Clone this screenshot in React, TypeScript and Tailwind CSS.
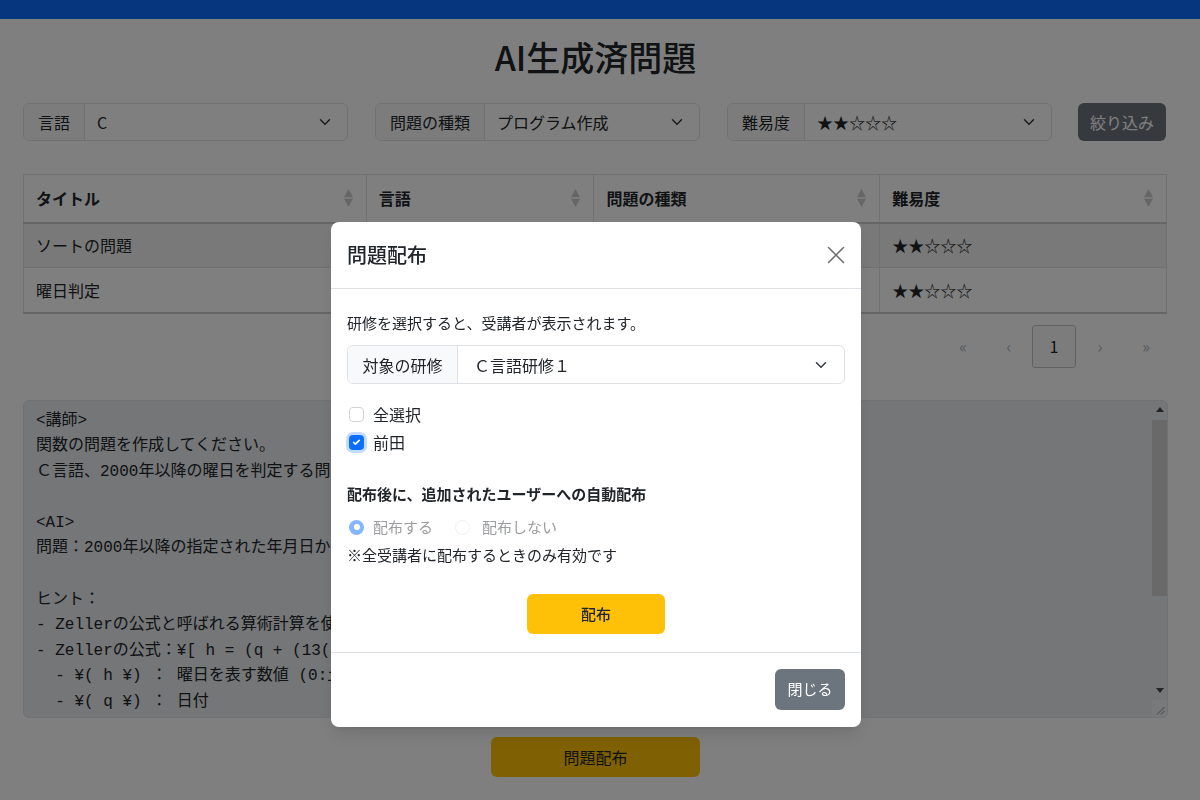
import React from "react";

const Chevron = () => (
  <svg width="16" height="12" viewBox="0 0 16 16" fill="none" stroke="#343a40" strokeWidth="2" strokeLinecap="round" strokeLinejoin="round">
    <path d="m2 5 6 6 6-6" />
  </svg>
);

const SortIcon = () => (
  <svg width="11" height="20" viewBox="0 0 11 20">
    <path d="M5.5 1 L10 9.3 H1 Z" fill="#c9ccd0" />
    <path d="M5.5 19 L10 10.7 H1 Z" fill="#c9ccd0" />
  </svg>
);

function FilterGroup({ label, value }: { label: string; value: string }) {
  return (
    <div className="flex h-[38px] w-[325px] rounded-md border border-[#dee2e6] bg-white">
      <div className="flex items-center rounded-l-md border-r border-[#dee2e6] bg-[#f8f9fa] px-[14px] text-[16px] text-[#212529]">
        {label}
      </div>
      <div className="flex flex-1 items-center justify-between pl-[12px] pr-[14px] text-[16px] text-[#212529]">
        <span>{value}</span>
        <Chevron />
      </div>
    </div>
  );
}

const textLines = [
  "<講師>",
  "関数の問題を作成してください。",
  "Ｃ言語、2000年以降の曜日を判定する問題にしてください。",
  "",
  "<AI>",
  "問題：2000年以降の指定された年月日から曜日を判定する関数を作成してください。",
  "",
  "ヒント：",
  "- Zellerの公式と呼ばれる算術計算を使用して曜日を求めます。",
  "- Zellerの公式：¥[ h = (q + (13(m+1))/5 + K + K/4 + J/4 + 5J) mod 7 ¥]",
  "  - ¥( h ¥) ： 曜日を表す数値 (0:土曜日, 1:日曜日, ..., 6:金曜日)",
  "  - ¥( q ¥) ： 日付",
  "  - ¥( m ¥) ： 月 (3:3月, 4:4月, ..., 14:2月)",
  "  - ¥( K ¥) ： 年の下2桁",
  "  - ¥( J ¥) ： 年の上2桁",
  "- 1月と2月は前年の13月と14月として扱います。",
  "",
  "入力例：",
  "2024 5 15",
];

export default function App() {
  const headers = [
    { t: "タイトル", w: "w-[343px]" },
    { t: "言語", w: "w-[228px]" },
    { t: "問題の種類", w: "w-[286px]" },
    { t: "難易度", w: "w-[287px]" },
  ];
  const rows = [
    ["ソートの問題", "C", "プログラム作成", "★★☆☆☆"],
    ["曜日判定", "C", "プログラム作成", "★★☆☆☆"],
  ];
  return (
    <div className="relative min-h-screen bg-white font-['Noto_Sans_CJK_JP',sans-serif] text-[#212529]">
      <div className="h-[19px] bg-[#0d6efd]" />
      <div className="ml-[23px] w-[1145px]">
        <h1 className="mt-[18px] text-center text-[34px] font-medium leading-[40px]">AI生成済問題</h1>

        <div className="mt-[26px] flex items-center gap-[27px]">
          <FilterGroup label="言語" value="C" />
          <FilterGroup label="問題の種類" value="プログラム作成" />
          <FilterGroup label="難易度" value="★★☆☆☆" />
          <button className="ml-[-1px] h-[38px] w-[88px] rounded-md bg-[#6c757d] text-[16px] text-white">絞り込み</button>
        </div>

        <table className="mt-[33px] w-[1144px] border-collapse text-[16px]">
          <thead>
            <tr className="h-[48px] bg-white">
              {headers.map((h) => (
                <th key={h.t} className={`${h.w} border border-b-2 border-[#dee2e6] border-b-[#c9cdd1] px-[12px] text-left font-bold`}>
                  <div className="flex items-center justify-between">
                    <span>{h.t}</span>
                    <SortIcon />
                  </div>
                </th>
              ))}
            </tr>
          </thead>
          <tbody>
            {rows.map((r, i) => (
              <tr key={i} className={`h-[45px] ${i === 0 ? "bg-[#f2f2f2]" : "bg-white"}`}>
                {r.map((c, j) => (
                  <td key={j} className={`border border-[#dee2e6] px-[12px] ${i === 1 ? "border-b-2 border-b-[#c9cdd1]" : ""}`}>
                    {c}
                  </td>
                ))}
              </tr>
            ))}
          </tbody>
        </table>

        <div className="mt-[11px] flex justify-end text-[16px]">
          <div className="flex h-[43px] w-[44px] items-center justify-center text-[#adb5bd]">«</div>
          <div className="ml-[2px] flex h-[43px] w-[44px] items-center justify-center text-[#adb5bd]">‹</div>
          <div className="ml-[1px] flex h-[43px] w-[44px] items-center justify-center rounded-[3px] border border-[#bfc4c9] bg-[#f8f9fa]">1</div>
          <div className="ml-[2px] flex h-[43px] w-[44px] items-center justify-center text-[#adb5bd]">›</div>
          <div className="ml-[2px] flex h-[43px] w-[44px] items-center justify-center text-[#adb5bd]">»</div>
        </div>

        <div className="relative mt-[32px] h-[318px] w-[1145px]">
          <textarea
            readOnly
            value={textLines.join("\n")}
            className="block h-full w-full resize-none overflow-hidden rounded-md border border-[#dee2e6] bg-[#e9ecef] py-[8px] pl-[12px] pr-[18px] font-['Liberation_Mono','Noto_Sans_CJK_JP',monospace] text-[16px] leading-[25.6px] text-[#212529] outline-none"
          />
          {/* scrollbar drawn over the textarea */}
          <div className="absolute bottom-[1px] right-[1px] top-[1px] flex w-[15px] flex-col">
            <div className="flex h-[18px] items-center justify-center">
              <svg width="8" height="5" viewBox="0 0 8 5"><path d="M4 0 L8 5 H0 Z" fill="#4a4a4a" /></svg>
            </div>
            <div className="flex-1 pt-[1px]">
              <div className="h-[176px] bg-[#d2d3d5]" />
            </div>
            <div className="flex h-[18px] items-center justify-center">
              <svg width="8" height="5" viewBox="0 0 8 5"><path d="M4 5 L8 0 H0 Z" fill="#4a4a4a" /></svg>
            </div>
            <div className="flex h-[17px] items-end justify-end rounded-br-md bg-[#f1f2f4] pb-[2px] pr-[2px]">
              <svg width="10" height="10" viewBox="0 0 10 10" stroke="#8a8a8a" strokeWidth="1">
                <path d="M9.5 2 L2 9.5 M9.5 6 L6 9.5" />
              </svg>
            </div>
          </div>
        </div>

        <div className="mt-[19px] flex justify-center">
          <button className="h-[40px] w-[209px] rounded-md bg-[#ffc107] text-[16px] text-[#212529]">問題配布</button>
        </div>
      </div>

      {/* backdrop */}
      <div className="fixed inset-0 bg-black/50" />

      {/* modal */}
      <div className="absolute left-[331px] top-[222px] w-[530px] rounded-lg bg-white shadow-lg">
        <div className="flex h-[67px] items-center justify-between border-b border-[#dee2e6] px-4">
          <h5 className="text-[20px] font-medium">問題配布</h5>
          <svg width="18" height="18" viewBox="0 0 18 18" stroke="#6e6f71" strokeWidth="1.6" strokeLinecap="round">
            <path d="M1.5 1.5 L16.5 16.5 M16.5 1.5 L1.5 16.5" />
          </svg>
        </div>
        <div className="px-4 pb-[18px] pt-[23px]">
          <p className="text-[15px] leading-[22px]">研修を選択すると、受講者が表示されます。</p>
          <div className="mt-[11px] flex h-[39px] rounded-md border border-[#dee2e6]">
            <div className="flex w-[110px] items-center justify-center rounded-l-md border-r border-[#dee2e6] bg-[#f8f9fa] text-[16px]">対象の研修</div>
            <div className="flex flex-1 items-center justify-between pl-[16px] pr-[15px] text-[16px]">
              <span>Ｃ言語研修１</span>
              <Chevron />
            </div>
          </div>
          <div className="mt-[16px]">
            <div className="flex h-[28px] items-center">
              <span className="ml-[2px] h-[15px] w-[15px] rounded-[4px] border border-[#d0d4d8] bg-white" />
              <span className="ml-[9px] text-[16px]">全選択</span>
            </div>
            <div className="flex h-[28px] items-center">
              <span className="ml-[2px] flex h-[15px] w-[15px] items-center justify-center rounded-[4px] bg-[#0d6efd] shadow-[0_0_0_3px_rgba(13,110,253,0.25)]">
                <svg width="11" height="11" viewBox="0 0 20 20" fill="none" stroke="white" strokeWidth="3" strokeLinecap="round" strokeLinejoin="round">
                  <path d="m5 10 3 3 7-7" />
                </svg>
              </span>
              <span className="ml-[9px] text-[16px]">前田</span>
            </div>
          </div>
          <p className="mt-[27px] text-[15px] font-bold leading-[22px]">配布後に、追加されたユーザーへの自動配布</p>
          <div className="mt-[11px] flex h-[22px] items-center text-[15px] text-[#9a9c9f]">
            <span className="ml-[2px] flex h-[15px] w-[15px] items-center justify-center rounded-full bg-[#86b7fe]">
              <span className="h-[6px] w-[6px] rounded-full bg-white" />
            </span>
            <span className="ml-[9px]">配布する</span>
            <span className="ml-[22px] h-[15px] w-[15px] rounded-full border border-[#eef0f2] bg-white" />
            <span className="ml-[12px]">配布しない</span>
          </div>
          <p className="mt-[6px] text-[15px] leading-[22px]">※全受講者に配布するときのみ有効です</p>
          <div className="mt-[28px] flex justify-center">
            <button className="h-[40px] w-[138px] rounded-md bg-[#ffc107] text-[15px] font-medium text-[#212529]">配布</button>
          </div>
        </div>
        <div className="flex justify-end border-t border-[#dee2e6] px-4 pb-[17px] pt-[16px]">
          <button className="h-[41px] w-[70px] rounded-md bg-[#6c757d] text-[15px] text-white">閉じる</button>
        </div>
      </div>
    </div>
  );
}
